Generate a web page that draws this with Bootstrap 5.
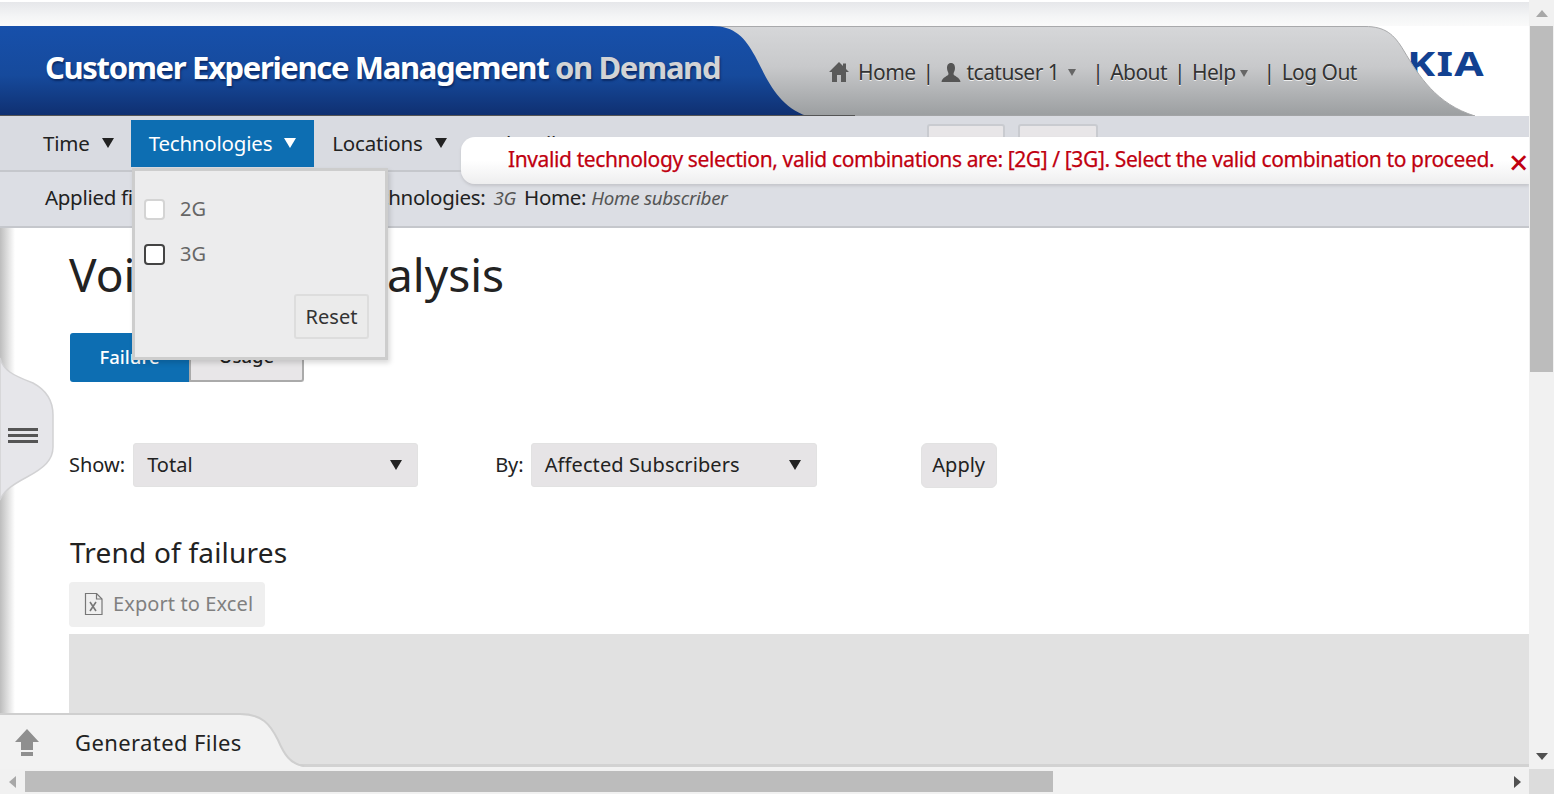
<!DOCTYPE html>
<html lang="en">
<head>
  <meta charset="UTF-8" />
  <title>Customer Experience Management on Demand</title>
  <link href="https://cdn.jsdelivr.net/npm/bootstrap@5.3.2/dist/css/bootstrap.min.css" rel="stylesheet" />
  <style>
    html, body { height: 100%; overflow: hidden; }
    body { font-family: "Noto Sans", sans-serif; color: #222; background: #fff; font-size: 20px; }
    .app-frame { position: relative; width: 1554px; height: 794px; overflow: hidden; }
    .app-main { width: 1529px; height: 769px; overflow: hidden; position: relative; }
    .tri { display: inline-block; width: 0; height: 0; border-style: solid; border-color: currentColor transparent transparent; border-width: 10px 6px 0; }

    .top-strip { height: 26px; background: linear-gradient(#e6e7ea, #f4f5f6 60%, #fafafa); border-top: 2px solid #fff; }
    .cem-header { height: 90px; position: relative; background: #fff; }
    .cem-shape { position: absolute; left: 0; top: 0; }
    .cem-logo { position: absolute; right: 44px; top: 14px; font-size: 34px; font-weight: 700; color: #124191; letter-spacing: 1px; line-height: 46px; transform: scaleX(1.25); transform-origin: right center; }
    .cem-title { position: relative; padding: 21px 0 0 45px; font-size: 31px; line-height: 40px; font-weight: 700; color: #fff; text-shadow: 1px 2px 2px #0a2a66; letter-spacing: -1.35px; white-space: nowrap; }
    .cem-title span { color: #d2d3d5; }
    .user-links { position: absolute; left: 828px; top: 31px; font-size: 21px; line-height: 30px; color: #333; text-shadow: 0 1px 0 #eee; letter-spacing: -.55px; white-space: nowrap; }
    .link-sep { margin: 0 7px 0 7px; }
    .link-sep.after-caret { margin-left: 16px; }
    .tiny-tri { color: #666; border-width: 7px 4px 0; vertical-align: 3px; margin-left: 4px; }
    .user-name { gap: 6px; }
    .user-name .tiny-tri { margin-left: 3px; }

    .menu-bar { height: 56px; background: #d9dbe1; border-bottom: 2px solid #c5c7cc; padding: 4px 0 0 25px; }
    .menu-item { height: 47px; padding: 0 18px; line-height: 47px; white-space: nowrap; font-size: 20.5px; letter-spacing: -.2px; }
    .menu-item:first-child { margin-right: -1px; }
    .menu-item.is-open { background: #0d6eb2; color: #fff; }
    .menu-item .tri { margin-left: 12px; vertical-align: 3px; }
    .stub-wrap { margin: 4px 0 0 159px; }
    .stub-btn { width: 78px; height: 40px; background: #e8e6e8; border: 2px solid #c9cbd0; border-radius: 3px; }
    .stub-btn + .stub-btn { width: 80px; margin-left: 13px; }

    .filter-bar { height: 56px; background: #dcdee4; border-bottom: 2px solid #c5c7cc; padding-left: 45px; line-height: 50px; font-size: 20.5px; letter-spacing: -.3px; word-spacing: 3px; white-space: nowrap; }
    .filter-bar em { font-size: 18.8px; color: #555; word-spacing: 0; }
    .filter-lead { word-spacing: 0; }
    .filter-bar em.filter-time { margin-right: 7px; }
    .filter-bar em.filter-home { margin-left: -3px; }

    .page-body { padding: 14px 0 0 69px; }
    .page-title { font-size: 46px; line-height: 64px; font-weight: 400; margin: 0 0 27px; word-spacing: -12px; }
    .tab-wrap { margin-left: 1px; }
    .tab-failure, .tab-usage { height: 49px; font-size: 18.5px; font-weight: 500; border-radius: 3px; padding: 0 0 2px; }
    .tab-failure { width: 119px; background: #0d6eb2; color: #fff; border: 0; }
    .tab-usage { width: 115px; background: #e8e6e8; color: #222; border: 2px solid #aaa; border-top: 0; margin-left: 0 !important; }
    .show-row { margin-top: 61px; height: 44px; font-size: 20px; }
    .show-select { height: 44px; background-color: #e6e4e6; border: 1px solid #e2e2e2; border-radius: 3px; font-size: 20px; color: #222; padding: 0 15px 0 13px; line-height: 42px; }
    .select-total { width: 285px; }
    .select-by { width: 286px; letter-spacing: .1px; }
    .by-label { margin: 0 7px 0 77px; }
    .apply-btn { height: 45px; width: 76px; padding: 0; margin-left: 104px; background: #e6e4e6; border: 1px solid #e2e2e2; font-size: 20px; color: #222; }
    .section-title { font-size: 28px; line-height: 40px; font-weight: 400; margin: 45px 0 10px 1px; letter-spacing: .2px; }
    .export-btn { width: 196px; height: 45px; background: #efefef; border: 0; border-radius: 4px; color: #808080; font-size: 20px; padding: 0 0 2px 15px; letter-spacing: .1px; gap: 10px; }
    .chart-area { height: 135px; margin-top: 7px; background: #e1e1e1; }

    /* things lying over the page */
    .notice { position: absolute; left: 461px; top: 137px; width: 1068px; height: 47px; background: linear-gradient(#fff, #fff 50%, #eeeeef); border-radius: 14px 0 0 14px; box-shadow: 0 2px 3px #c4c5ca; color: #c00010; font-size: 21px; line-height: 45px; padding-left: 47px; letter-spacing: -.385px; white-space: nowrap; -webkit-text-stroke: .25px #c00010; }
    .notice-close { position: absolute; right: -1px; top: 3px; width: 21px; font-size: 34px; line-height: 45px; font-weight: 500; -webkit-text-stroke: 0; }
    .tech-panel { position: absolute; left: 132px; top: 168px; width: 256px; height: 192px; background: #ececed; border: 3px solid #cdcdcd; box-shadow: 2px 3px 5px rgba(0, 0, 0, .15); }
    .tech-row { position: absolute; left: 9px; color: #666; font-size: 20px; line-height: 26px; gap: 15px; }
    .tech-row .form-check-input { width: 21px; height: 21px; margin: 0; border-radius: 4px; border: 2px solid #d4d4d4; box-shadow: none; }
    .tech-row .form-check-input.is-focused { border-color: #444; }
    .reset-btn { position: absolute; left: 159px; top: 123px; width: 75px; height: 45px; padding: 0; background: #ebebeb; border: 2px solid #ddd; font-size: 20px; color: #333; border-radius: 3px; }
    .side-handle { position: absolute; left: 0; top: 228px; width: 62px; height: 492px; }
    .files-tab { position: absolute; left: 0; top: 712px; width: 1529px; height: 57px; }
    .files-label { position: absolute; left: 75px; top: 726px; font-size: 22px; line-height: 32px; letter-spacing: .4px; }

    .scroll-v { position: absolute; left: 1529px; top: 0; width: 25px; height: 769px; background: #f1f1f1; }
    .scroll-v i { position: absolute; left: 1px; top: 26px; width: 23px; height: 346px; background: #bcbcbc; }
    .scroll-h { position: absolute; left: 0; top: 769px; width: 1529px; height: 25px; background: #f1f1f1; }
    .scroll-h i { position: absolute; left: 25px; top: 2px; width: 1028px; height: 21px; background: #bcbcbc; }
    .scroll-corner { position: absolute; left: 1529px; top: 769px; width: 25px; height: 25px; background: #dcdcdc; }
    .scroll-arrow { position: absolute; }
  </style>
</head>
<body>
  <div class="app-frame">
    <div class="app-main">
      <div class="top-strip"></div>

      <header class="cem-header">
        <div class="cem-logo">NOKIA</div>
        <svg class="cem-shape" width="1529" height="90" viewBox="0 0 1529 90">
          <defs>
            <linearGradient id="blueFill" x1="0" y1="0" x2="0" y2="1"><stop offset="0" stop-color="#1750ab"/><stop offset=".55" stop-color="#164a9c"/><stop offset="1" stop-color="#0f2f70"/></linearGradient>
            <linearGradient id="greyFill" x1="0" y1="0" x2="0" y2="1"><stop offset="0" stop-color="#d6d7d9"/><stop offset=".45" stop-color="#c8c9cb"/><stop offset="1" stop-color="#9b9ea0"/></linearGradient>
          </defs>
          <path d="M700 0.5H1365C1385 0.5 1394 8 1404 25C1419 50 1436 78 1475 90H700Z" fill="url(#greyFill)" stroke="#a8a9ab"/>
          <path d="M0 0H712C735 0 745 12 755 30C768 55 778 80 807 90H0Z" fill="url(#blueFill)"/>
          <path d="M0 89.500H855" stroke="#555" stroke-width="1"/>
        </svg>
        <div class="cem-title">Customer Experience Management <span>on Demand</span></div>
        <div class="user-links d-flex align-items-center">
          <span class="d-flex align-items-center gap-2">
            <svg width="22" height="20" viewBox="0 0 22 20"><path d="M11 0L15 4V1.500H18V7L21 10H18V20H13V13H9V20H4V10H1Z" fill="#5a5a5a"/></svg>Home
          </span>
          <span class="link-sep">|</span>
          <span class="d-flex align-items-center user-name">
            <svg width="20" height="19" viewBox="0 0 20 19"><path d="M10 0C13 0 14 2.500 14 5C14 8 12.500 9.500 12.500 11C12.500 13 19 14 19.500 19H.5C1 14 7.500 13 7.500 11C7.500 9.500 6 8 6 5C6 2.500 7 0 10 0Z" fill="#555"/></svg>tcatuser 1<span class="tri tiny-tri"></span>
          </span>
          <span class="link-sep after-caret">|</span><span>About</span>
          <span class="link-sep">|</span><span>Help<span class="tri tiny-tri"></span></span>
          <span class="link-sep after-caret">|</span><span>Log Out</span>
        </div>
      </header>

      <nav class="menu-bar d-flex">
        <div class="menu-item">Time<span class="tri"></span></div>
        <div class="menu-item is-open">Technologies<span class="tri"></span></div>
        <div class="menu-item">Locations<span class="tri"></span></div>
        <div class="menu-item">Subscribers<span class="tri"></span></div>
        <div class="menu-item">Reports<span class="tri"></span></div>
        <div class="d-flex stub-wrap">
          <div class="stub-btn"></div>
          <div class="stub-btn"></div>
        </div>
      </nav>

      <div class="filter-bar"><span class="filter-lead">Applied filters: </span>Time: <em class="filter-time">Last 30 days</em> Technologies: <em>3G</em> Home: <em class="filter-home">Home subscriber</em></div>

      <main class="page-body">
        <h1 class="page-title">Voice Failure Analysis</h1>
        <div class="btn-group tab-wrap" role="group">
          <button type="button" class="btn tab-failure">Failure</button>
          <button type="button" class="btn tab-usage">Usage</button>
        </div>

        <div class="show-row d-flex align-items-center">
          <label class="me-2">Show:</label>
          <div class="show-select d-flex justify-content-between align-items-center select-total">Total<span class="tri"></span></div>
          <label class="by-label">By:</label>
          <div class="show-select d-flex justify-content-between align-items-center select-by">Affected Subscribers<span class="tri"></span></div>
          <button type="button" class="btn apply-btn">Apply</button>
        </div>

        <h2 class="section-title">Trend of failures</h2>
        <button type="button" class="btn export-btn d-flex align-items-center">
          <svg width="19" height="22" viewBox="0 0 19 22" fill="none" stroke="#777"><path d="M1.500 .5H12.500L18 6V21.500H1.500Z" stroke-width="1.200"/><path d="M12.500 .5V6H18" stroke-width="1.200"/><path d="M6 9L12 18M12 9L6 18" stroke-width="1.600"/></svg>
          Export to Excel
        </button>
        <div class="chart-area"></div>
      </main>

      <svg class="side-handle" viewBox="0 0 62 492">
        <defs><linearGradient id="edgeShade" x1="0" x2="1"><stop offset="0" stop-color="#bdbdbd"/><stop offset=".5" stop-color="#dedede"/><stop offset="1" stop-color="#fff"/></linearGradient></defs>
        <rect width="15" height="492" fill="url(#edgeShade)"/>
        <path d="M0 130C3 142 12 147 33 155C46 162 53 172 53 187V219C53 232 44 240 27 249C14 256 4 262 0 272Z" fill="#e6e6ea" stroke="#d2d2d4" stroke-width="1.500"/>
        <path d="M8 201.500H38M8 207.500H38M8 213.500H38" stroke="#555" stroke-width="3"/>
      </svg>

      <svg class="files-tab" viewBox="0 0 1529 57">
        <rect x="0" y="52" width="1529" height="5" fill="#d2d2d2"/>
        <path d="M0 2H240C262 2 270 12 278 28C284 42 290 52 304 55H1529V57H0Z" fill="#f2f2f2"/>
        <path d="M0 2H240C262 2 270 12 278 28C284 42 290 52 304 54" fill="none" stroke="#cfcfcf" stroke-width="2"/>
        <path d="M27 17L39 30H33V38H21V30H15Z" fill="#8f8f8f"/>
        <path d="M21 40H33V44H21Z" fill="#8f8f8f"/>
      </svg>
      <div class="files-label">Generated Files</div>
    </div>

    <div class="notice">Invalid technology selection, valid combinations are: [2G] / [3G]. Select the valid combination to proceed.<span class="notice-close">×</span></div>

    <div class="tech-panel">
      <div class="tech-row d-flex align-items-center" style="top: 25px"><input class="form-check-input" type="checkbox" id="t2g"><label for="t2g">2G</label></div>
      <div class="tech-row d-flex align-items-center" style="top: 70px"><input class="form-check-input is-focused" type="checkbox" id="t3g"><label for="t3g">3G</label></div>
      <button type="button" class="btn reset-btn">Reset</button>
    </div>

    <div class="scroll-v"><i></i>
      <svg class="scroll-arrow" style="left: 7px; top: 10px" width="12" height="7"><path d="M6 0L12 7H0Z" fill="#a8a8a8"/></svg>
      <svg class="scroll-arrow" style="left: 7px; top: 753px" width="12" height="7"><path d="M6 7L12 0H0Z" fill="#505050"/></svg>
    </div>
    <div class="scroll-h"><i></i>
      <svg class="scroll-arrow" style="left: 9px; top: 7px" width="7" height="12"><path d="M0 6L7 0V12Z" fill="#a8a8a8"/></svg>
      <svg class="scroll-arrow" style="left: 1514px; top: 7px" width="7" height="12"><path d="M7 6L0 0V12Z" fill="#505050"/></svg>
    </div>
    <div class="scroll-corner"></div>
  </div>
  <script src="https://cdn.jsdelivr.net/npm/bootstrap@5.3.2/dist/js/bootstrap.bundle.min.js"></script>
</body>
</html>
